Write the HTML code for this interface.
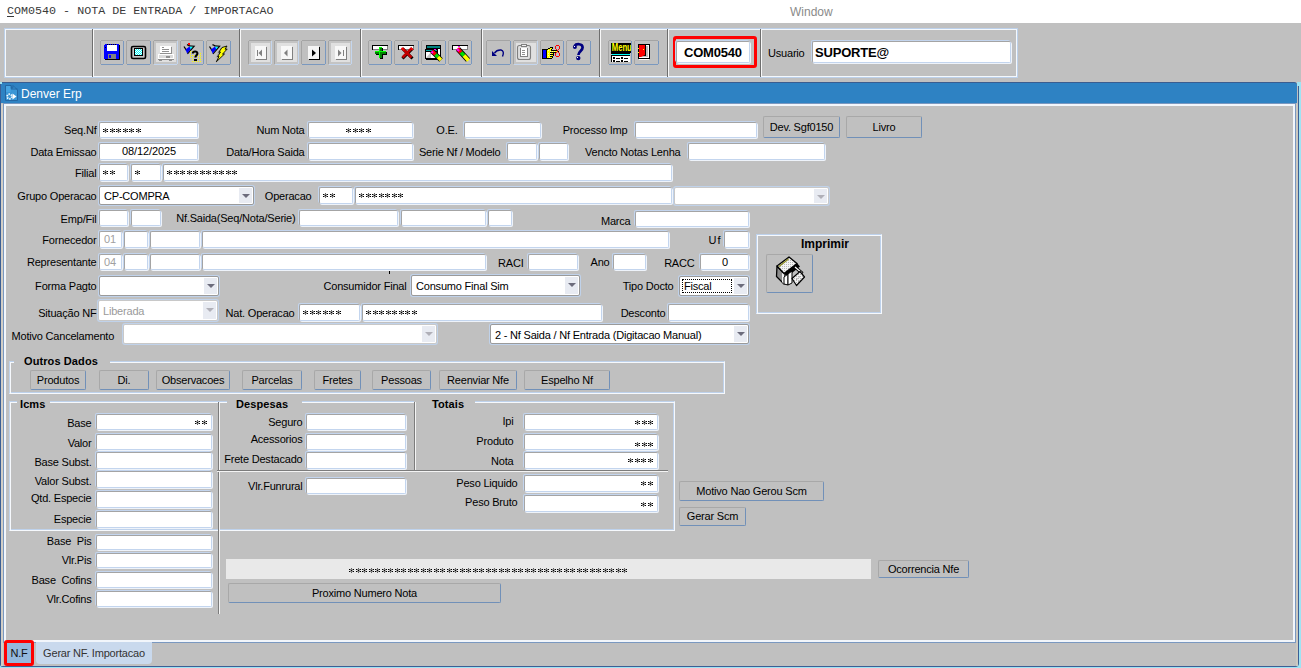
<!DOCTYPE html><html><head><meta charset="utf-8"><style>
*{margin:0;padding:0;box-sizing:border-box}
html,body{width:1301px;height:668px;overflow:hidden;background:#fff;font-family:"Liberation Sans",sans-serif;font-size:11px;color:#000}
div{position:absolute}
span{position:absolute}
.lb{white-space:nowrap;line-height:14px;font-size:11px}
.tf{background:#fff;border:1px solid;border-color:#a4a4a4 #c3d5ee #c3d5ee #a4a4a4;box-shadow:-1px -1px 0 #c3d5ee,1px 1px 0 #eef3fa;border-radius:2px;padding:0 3px 0 4px;white-space:nowrap;overflow:hidden;font-size:11px;letter-spacing:-0.1px}
i.ast{font-style:normal;font-size:15px;letter-spacing:0.66px;position:relative;top:3px;color:#222}
.lb{letter-spacing:-0.2px}
.dd .ddt.foc{left:2px;top:2px;bottom:2px;right:16px;border:1px dotted #000;padding-left:1px;line-height:13px !important}
.bt{letter-spacing:-0.2px}
.dd{letter-spacing:-0.2px}
.dd{background:#fff;border:1px solid #9a9a9a;box-shadow:0 0 0 1px #c0d2ea;border-radius:2px;white-space:nowrap;overflow:hidden}
.dd .ddt{left:4px;top:1px}
.dd .arr{right:1px;top:1px;bottom:1px;width:13px;background:#e8ebf2}
.dd .arr:after{content:"";position:absolute;left:3px;top:6px;border-left:4px solid transparent;border-right:4px solid transparent;border-top:4px solid #6c6c7c}
.dd.dis{border-color:#c8c8c8}
.dd.dis .ddt{color:#9a9a9a}
.dd.dis .arr:after{border-top-color:#b0b0b8}
.bt{background:#c0c0c0;border:1px solid #a8a8a8;border-right-color:#7190b8;border-bottom-color:#7190b8;border-radius:2px;text-align:center;white-space:nowrap}
.fr{border:1px solid;border-color:#bed2ec #f6f9fd #f6f9fd #bed2ec;box-shadow:inset 1px 1px 0 #f6f9fd,inset -1px -1px 0 #bed2ec}
.tt{font-weight:bold;font-size:11px;line-height:14px;white-space:nowrap;letter-spacing:0.1px}
.frt{font-weight:bold;font-size:11px;line-height:14px;background:#c0c0c0;padding:0 3px;white-space:nowrap}
</style></head><body>
<svg width="0" height="0" style="position:absolute"><defs><g id="ast" shape-rendering="crispEdges"><rect x="2" y="0" width="1" height="1" fill="#606060"/><rect x="0" y="1" width="1" height="1" fill="#000"/><rect x="1" y="1" width="1" height="1" fill="#808080"/><rect x="2" y="1" width="1" height="1" fill="#888888"/><rect x="3" y="1" width="1" height="1" fill="#808080"/><rect x="4" y="1" width="1" height="1" fill="#000"/><rect x="1" y="2" width="1" height="1" fill="#a8a8a8"/><rect x="2" y="2" width="1" height="1" fill="#000"/><rect x="3" y="2" width="1" height="1" fill="#a8a8a8"/><rect x="0" y="3" width="1" height="1" fill="#000"/><rect x="1" y="3" width="1" height="1" fill="#808080"/><rect x="2" y="3" width="1" height="1" fill="#888888"/><rect x="3" y="3" width="1" height="1" fill="#808080"/><rect x="4" y="3" width="1" height="1" fill="#000"/><rect x="2" y="4" width="1" height="1" fill="#606060"/></g></defs></svg>
<div style="left:7px;top:4px;font-family:'Liberation Mono',monospace;font-size:11.7px;line-height:14px;color:#3a3a3a;white-space:nowrap"><u style="text-underline-offset:2px">C</u>OM0540 - NOTA DE ENTRADA / IMPORTACAO</div>
<div style="left:790px;top:4px;font-size:12px;line-height:16px;color:#8a8a8a">Window</div>
<div style="left:0px;top:23px;width:1301px;height:59px;background:#c0c0c0"></div>
<div style="left:4px;top:28px;width:1014px;height:50px;border:1px solid #bcd0ea;box-shadow:inset 1px 1px 0 #f4f8fc"></div>
<div style="left:5px;top:76px;width:1012px;height:1px;background:#f4f8fc"></div>
<div style="left:1016px;top:29px;width:1px;height:48px;background:#f4f8fc"></div>
<div style="left:92px;top:29px;width:1px;height:48px;background:#6e6e6e"></div>
<div style="left:93px;top:29px;width:1px;height:48px;background:#f8f8f8"></div>
<div style="left:239px;top:29px;width:1px;height:48px;background:#6e6e6e"></div>
<div style="left:240px;top:29px;width:1px;height:48px;background:#f8f8f8"></div>
<div style="left:360px;top:29px;width:1px;height:48px;background:#6e6e6e"></div>
<div style="left:361px;top:29px;width:1px;height:48px;background:#f8f8f8"></div>
<div style="left:481px;top:29px;width:1px;height:48px;background:#6e6e6e"></div>
<div style="left:482px;top:29px;width:1px;height:48px;background:#f8f8f8"></div>
<div style="left:599px;top:29px;width:1px;height:48px;background:#6e6e6e"></div>
<div style="left:600px;top:29px;width:1px;height:48px;background:#f8f8f8"></div>
<div style="left:667px;top:29px;width:1px;height:48px;background:#6e6e6e"></div>
<div style="left:668px;top:29px;width:1px;height:48px;background:#f8f8f8"></div>
<div style="left:760px;top:29px;width:1px;height:48px;background:#6e6e6e"></div>
<div style="left:761px;top:29px;width:1px;height:48px;background:#f8f8f8"></div>
<svg style="position:absolute;left:0;top:0" width="1301" height="82"><rect x="100" y="41" width="1" height="23" fill="#a4a4a4" shape-rendering="crispEdges"/><rect x="101" y="40" width="22" height="1" fill="#a4a4a4" shape-rendering="crispEdges"/><rect x="123" y="41" width="1" height="23" fill="#7a98bf" shape-rendering="crispEdges"/><rect x="101" y="64" width="22" height="1" fill="#7a98bf" shape-rendering="crispEdges"/><rect x="104" y="44" width="15" height="15" fill="#0000ff" shape-rendering="crispEdges"/><rect x="119" y="45" width="1" height="15" fill="#000" shape-rendering="crispEdges"/><rect x="105" y="59" width="15" height="1" fill="#000" shape-rendering="crispEdges"/><rect x="107" y="45" width="10" height="6" fill="#fff" shape-rendering="crispEdges"/><rect x="107" y="44" width="1" height="1" fill="#000" shape-rendering="crispEdges"/><rect x="109" y="44" width="1" height="1" fill="#000" shape-rendering="crispEdges"/><rect x="111" y="44" width="1" height="1" fill="#000" shape-rendering="crispEdges"/><rect x="113" y="44" width="1" height="1" fill="#000" shape-rendering="crispEdges"/><rect x="115" y="44" width="1" height="1" fill="#000" shape-rendering="crispEdges"/><rect x="105" y="47" width="1" height="1" fill="#000" shape-rendering="crispEdges"/><rect x="108" y="54" width="8" height="5" fill="#808080" shape-rendering="crispEdges"/><rect x="109" y="55" width="2" height="3" fill="#0000ff" shape-rendering="crispEdges"/><rect x="109" y="59" width="1" height="1" fill="#000" shape-rendering="crispEdges"/><rect x="111" y="59" width="1" height="1" fill="#000" shape-rendering="crispEdges"/><rect x="113" y="59" width="1" height="1" fill="#000" shape-rendering="crispEdges"/><rect x="115" y="59" width="1" height="1" fill="#000" shape-rendering="crispEdges"/><rect x="104" y="44" width="1" height="1" fill="#c0c0c0" shape-rendering="crispEdges"/><rect x="126" y="41" width="1" height="23" fill="#a4a4a4" shape-rendering="crispEdges"/><rect x="127" y="40" width="23" height="1" fill="#a4a4a4" shape-rendering="crispEdges"/><rect x="150" y="41" width="1" height="23" fill="#7a98bf" shape-rendering="crispEdges"/><rect x="127" y="64" width="23" height="1" fill="#7a98bf" shape-rendering="crispEdges"/><rect x="131.5" y="46.5" width="14" height="12" rx="1.5" fill="none" stroke="#000" stroke-width="1.6"/><rect x="133" y="48" width="11" height="9" fill="#c8c8c8" shape-rendering="crispEdges"/><rect x="134" y="48" width="9" height="8" fill="#000" shape-rendering="crispEdges"/><rect x="135" y="49" width="7" height="6" fill="#00ffff" shape-rendering="crispEdges"/><rect x="135" y="49" width="1" height="1" fill="#fff" shape-rendering="crispEdges"/><rect x="137" y="49" width="1" height="1" fill="#fff" shape-rendering="crispEdges"/><rect x="139" y="49" width="1" height="1" fill="#fff" shape-rendering="crispEdges"/><rect x="141" y="49" width="1" height="1" fill="#fff" shape-rendering="crispEdges"/><rect x="136" y="50" width="1" height="1" fill="#fff" shape-rendering="crispEdges"/><rect x="138" y="50" width="1" height="1" fill="#fff" shape-rendering="crispEdges"/><rect x="140" y="50" width="1" height="1" fill="#fff" shape-rendering="crispEdges"/><rect x="135" y="51" width="1" height="1" fill="#fff" shape-rendering="crispEdges"/><rect x="137" y="51" width="1" height="1" fill="#fff" shape-rendering="crispEdges"/><rect x="139" y="51" width="1" height="1" fill="#fff" shape-rendering="crispEdges"/><rect x="141" y="51" width="1" height="1" fill="#fff" shape-rendering="crispEdges"/><rect x="136" y="52" width="1" height="1" fill="#fff" shape-rendering="crispEdges"/><rect x="138" y="52" width="1" height="1" fill="#fff" shape-rendering="crispEdges"/><rect x="140" y="52" width="1" height="1" fill="#fff" shape-rendering="crispEdges"/><rect x="135" y="53" width="1" height="1" fill="#fff" shape-rendering="crispEdges"/><rect x="137" y="53" width="1" height="1" fill="#fff" shape-rendering="crispEdges"/><rect x="139" y="53" width="1" height="1" fill="#fff" shape-rendering="crispEdges"/><rect x="141" y="53" width="1" height="1" fill="#fff" shape-rendering="crispEdges"/><rect x="136" y="54" width="1" height="1" fill="#fff" shape-rendering="crispEdges"/><rect x="138" y="54" width="1" height="1" fill="#fff" shape-rendering="crispEdges"/><rect x="140" y="54" width="1" height="1" fill="#fff" shape-rendering="crispEdges"/><rect x="153" y="41" width="1" height="23" fill="#a4a4a4" shape-rendering="crispEdges"/><rect x="154" y="40" width="23" height="1" fill="#a4a4a4" shape-rendering="crispEdges"/><rect x="177" y="41" width="1" height="23" fill="#c4d6ee" shape-rendering="crispEdges"/><rect x="154" y="64" width="23" height="1" fill="#c4d6ee" shape-rendering="crispEdges"/><rect x="154" y="41" width="23" height="23" fill="#c4c4c4" shape-rendering="crispEdges"/><rect x="156" y="43" width="20" height="19" fill="#e0e0e0" shape-rendering="crispEdges"/><rect x="160" y="46" width="11" height="7" fill="#fff" shape-rendering="crispEdges"/><rect x="171" y="47" width="1" height="7" fill="#909090" shape-rendering="crispEdges"/><rect x="160" y="53" width="12" height="1" fill="#909090" shape-rendering="crispEdges"/><rect x="162" y="47" width="2" height="1" fill="#909090" shape-rendering="crispEdges"/><rect x="162" y="49" width="7" height="1" fill="#909090" shape-rendering="crispEdges"/><rect x="162" y="51" width="7" height="1" fill="#909090" shape-rendering="crispEdges"/><rect x="158" y="54" width="16" height="5" fill="#fff" shape-rendering="crispEdges"/><rect x="159" y="55" width="14" height="3" fill="#dadada" shape-rendering="crispEdges"/><rect x="166" y="56" width="4" height="2" fill="#909090" shape-rendering="crispEdges"/><rect x="158" y="59" width="16" height="1" fill="#909090" shape-rendering="crispEdges"/><rect x="159" y="60" width="3" height="1" fill="#909090" shape-rendering="crispEdges"/><rect x="169" y="60" width="3" height="1" fill="#909090" shape-rendering="crispEdges"/><rect x="180" y="41" width="1" height="23" fill="#a4a4a4" shape-rendering="crispEdges"/><rect x="181" y="40" width="22" height="1" fill="#a4a4a4" shape-rendering="crispEdges"/><rect x="203" y="41" width="1" height="23" fill="#7a98bf" shape-rendering="crispEdges"/><rect x="181" y="64" width="22" height="1" fill="#7a98bf" shape-rendering="crispEdges"/><line x1="184" y1="46.5" x2="186.8" y2="50.8" stroke="#000" stroke-width="1.2"/><polygon points="185.5,49.5 189.5,46.5 191.5,48.5 187.2,53.8" fill="#0000ff" /><polygon points="189.5,46.5 194,46.5 190.8,49.5" fill="#00ffff" /><polyline points="188.5,45.8 194.2,46.2 187.5,54" fill="none" stroke="#000" stroke-width="1.1"/><line x1="187" y1="44.6" x2="189.5" y2="45.8" stroke="#000" stroke-width="1.2"/><rect x="188" y="43" width="2" height="2" fill="#ff0000" shape-rendering="crispEdges"/><rect x="190" y="51" width="1" height="1" fill="#ffff00" shape-rendering="crispEdges"/><rect x="192" y="51" width="1" height="1" fill="#ffff00" shape-rendering="crispEdges"/><rect x="190" y="53" width="1" height="1" fill="#ffff00" shape-rendering="crispEdges"/><rect x="200" y="53" width="1" height="1" fill="#ffff00" shape-rendering="crispEdges"/><rect x="190" y="55" width="1" height="1" fill="#ffff00" shape-rendering="crispEdges"/><rect x="192" y="55" width="1" height="1" fill="#ffff00" shape-rendering="crispEdges"/><rect x="194" y="55" width="1" height="1" fill="#ffff00" shape-rendering="crispEdges"/><rect x="198" y="55" width="1" height="1" fill="#ffff00" shape-rendering="crispEdges"/><rect x="200" y="55" width="1" height="1" fill="#ffff00" shape-rendering="crispEdges"/><rect x="190" y="57" width="1" height="1" fill="#ffff00" shape-rendering="crispEdges"/><rect x="192" y="57" width="1" height="1" fill="#ffff00" shape-rendering="crispEdges"/><rect x="198" y="57" width="1" height="1" fill="#ffff00" shape-rendering="crispEdges"/><rect x="200" y="57" width="1" height="1" fill="#ffff00" shape-rendering="crispEdges"/><rect x="192" y="59" width="1" height="1" fill="#ffff00" shape-rendering="crispEdges"/><rect x="198" y="59" width="1" height="1" fill="#ffff00" shape-rendering="crispEdges"/><rect x="200" y="59" width="1" height="1" fill="#ffff00" shape-rendering="crispEdges"/><rect x="192" y="61" width="1" height="1" fill="#ffff00" shape-rendering="crispEdges"/><rect x="194" y="61" width="1" height="1" fill="#ffff00" shape-rendering="crispEdges"/><rect x="196" y="61" width="1" height="1" fill="#ffff00" shape-rendering="crispEdges"/><rect x="198" y="61" width="1" height="1" fill="#ffff00" shape-rendering="crispEdges"/><rect x="200" y="61" width="1" height="1" fill="#ffff00" shape-rendering="crispEdges"/><path d="M192.8,53.6 C192.8,51 197.6,50.6 197.4,53.6 C197.2,55.4 195.4,55.4 195.4,57.6" fill="none" stroke="#000" stroke-width="2.1"/><rect x="194" y="59" width="3" height="2" fill="#000" shape-rendering="crispEdges"/><rect x="206" y="41" width="1" height="23" fill="#a4a4a4" shape-rendering="crispEdges"/><rect x="207" y="40" width="23" height="1" fill="#a4a4a4" shape-rendering="crispEdges"/><rect x="230" y="41" width="1" height="23" fill="#7a98bf" shape-rendering="crispEdges"/><rect x="207" y="64" width="23" height="1" fill="#7a98bf" shape-rendering="crispEdges"/><line x1="209.5" y1="46.5" x2="212.3" y2="50.8" stroke="#000" stroke-width="1.2"/><polygon points="211.0,49.5 215.0,46.5 217.0,48.5 212.7,53.8" fill="#0000ff" /><polygon points="215.0,46.5 219.5,46.5 216.3,49.5" fill="#00ffff" /><polyline points="214.0,45.8 219.7,46.2 213.0,54" fill="none" stroke="#000" stroke-width="1.1"/><line x1="212.5" y1="44.6" x2="215.0" y2="45.8" stroke="#000" stroke-width="1.2"/><polygon points="220.5,48 222.5,47.5 218.8,52.3 216.8,53.5" fill="#a0a0a0" /><polygon points="218.5,52.5 220,52.3 217.5,56.8 215.5,58" fill="#a0a0a0" /><polygon points="222,47.5 227,46 225,49.2 227.2,49 222.5,54.2 224.5,54 216.3,61.8 219,56.5 217.5,56.8 220.5,52 218.8,52.3" fill="#ffff00" stroke="#000" stroke-width="0.9" stroke-linejoin="miter"/><rect x="248" y="41" width="1" height="23" fill="#a4a4a4" shape-rendering="crispEdges"/><rect x="249" y="40" width="22" height="1" fill="#a4a4a4" shape-rendering="crispEdges"/><rect x="271" y="41" width="1" height="23" fill="#c4d6ee" shape-rendering="crispEdges"/><rect x="249" y="64" width="22" height="1" fill="#c4d6ee" shape-rendering="crispEdges"/><rect x="249" y="41" width="22" height="23" fill="#c4c4c4" shape-rendering="crispEdges"/><rect x="251" y="43" width="19" height="19" fill="#e0e0e0" shape-rendering="crispEdges"/><rect x="255" y="46" width="11" height="13" fill="#f8f8f8" shape-rendering="crispEdges"/><rect x="266" y="47" width="1" height="13" fill="#808080" shape-rendering="crispEdges"/><rect x="256" y="59" width="11" height="1" fill="#808080" shape-rendering="crispEdges"/><rect x="266" y="47" width="1" height="13" fill="#808080" shape-rendering="crispEdges"/><rect x="257" y="50" width="1" height="6" fill="#808080" shape-rendering="crispEdges"/><polygon points="258.5,53 262,49.5 262,56.5" fill="#808080" /><rect x="274" y="41" width="1" height="23" fill="#a4a4a4" shape-rendering="crispEdges"/><rect x="275" y="40" width="23" height="1" fill="#a4a4a4" shape-rendering="crispEdges"/><rect x="298" y="41" width="1" height="23" fill="#c4d6ee" shape-rendering="crispEdges"/><rect x="275" y="64" width="23" height="1" fill="#c4d6ee" shape-rendering="crispEdges"/><rect x="275" y="41" width="23" height="23" fill="#c4c4c4" shape-rendering="crispEdges"/><rect x="277" y="43" width="20" height="19" fill="#e0e0e0" shape-rendering="crispEdges"/><rect x="281" y="46" width="11" height="13" fill="#f8f8f8" shape-rendering="crispEdges"/><rect x="292" y="47" width="1" height="13" fill="#808080" shape-rendering="crispEdges"/><rect x="282" y="59" width="11" height="1" fill="#808080" shape-rendering="crispEdges"/><rect x="292" y="47" width="1" height="13" fill="#808080" shape-rendering="crispEdges"/><polygon points="284,53 287.5,49.5 287.5,56.5" fill="#808080" /><rect x="301" y="41" width="1" height="23" fill="#a4a4a4" shape-rendering="crispEdges"/><rect x="302" y="40" width="23" height="1" fill="#a4a4a4" shape-rendering="crispEdges"/><rect x="325" y="41" width="1" height="23" fill="#7a98bf" shape-rendering="crispEdges"/><rect x="302" y="64" width="23" height="1" fill="#7a98bf" shape-rendering="crispEdges"/><rect x="308" y="46" width="11" height="13" fill="#f4f4f4" shape-rendering="crispEdges"/><rect x="319" y="47" width="1" height="13" fill="#000" shape-rendering="crispEdges"/><rect x="309" y="59" width="11" height="1" fill="#000" shape-rendering="crispEdges"/><polygon points="312,49.5 316,53 312,56.5" fill="#000" /><rect x="328" y="41" width="1" height="23" fill="#a4a4a4" shape-rendering="crispEdges"/><rect x="329" y="40" width="22" height="1" fill="#a4a4a4" shape-rendering="crispEdges"/><rect x="351" y="41" width="1" height="23" fill="#c4d6ee" shape-rendering="crispEdges"/><rect x="329" y="64" width="22" height="1" fill="#c4d6ee" shape-rendering="crispEdges"/><rect x="329" y="41" width="22" height="23" fill="#c4c4c4" shape-rendering="crispEdges"/><rect x="331" y="43" width="19" height="19" fill="#e0e0e0" shape-rendering="crispEdges"/><rect x="335" y="46" width="11" height="13" fill="#f8f8f8" shape-rendering="crispEdges"/><rect x="346" y="47" width="1" height="13" fill="#808080" shape-rendering="crispEdges"/><rect x="336" y="59" width="11" height="1" fill="#808080" shape-rendering="crispEdges"/><rect x="346" y="47" width="1" height="13" fill="#808080" shape-rendering="crispEdges"/><polygon points="338,49.5 341.5,53 338,56.5" fill="#808080" /><rect x="343" y="50" width="1" height="6" fill="#808080" shape-rendering="crispEdges"/><rect x="368" y="41" width="1" height="23" fill="#a4a4a4" shape-rendering="crispEdges"/><rect x="369" y="40" width="22" height="1" fill="#a4a4a4" shape-rendering="crispEdges"/><rect x="391" y="41" width="1" height="23" fill="#7a98bf" shape-rendering="crispEdges"/><rect x="369" y="64" width="22" height="1" fill="#7a98bf" shape-rendering="crispEdges"/><rect x="372" y="45" width="16" height="5" fill="#000" shape-rendering="crispEdges"/><rect x="373" y="46" width="14" height="3" fill="#fff" shape-rendering="crispEdges"/><rect x="387" y="46" width="1" height="4" fill="#808080" shape-rendering="crispEdges"/><rect x="373" y="49" width="15" height="1" fill="#808080" shape-rendering="crispEdges"/><rect x="380" y="48" width="3" height="11" fill="#000" shape-rendering="crispEdges"/><rect x="376" y="52" width="11" height="3" fill="#000" shape-rendering="crispEdges"/><rect x="379" y="47" width="3" height="11" fill="#008000" shape-rendering="crispEdges"/><rect x="375" y="51" width="11" height="3" fill="#008000" shape-rendering="crispEdges"/><rect x="379" y="47" width="1" height="11" fill="#00ff00" shape-rendering="crispEdges"/><rect x="375" y="51" width="11" height="1" fill="#00ff00" shape-rendering="crispEdges"/><rect x="379" y="47" width="3" height="1" fill="#00ff00" shape-rendering="crispEdges"/><rect x="394" y="41" width="1" height="23" fill="#a4a4a4" shape-rendering="crispEdges"/><rect x="395" y="40" width="23" height="1" fill="#a4a4a4" shape-rendering="crispEdges"/><rect x="418" y="41" width="1" height="23" fill="#7a98bf" shape-rendering="crispEdges"/><rect x="395" y="64" width="23" height="1" fill="#7a98bf" shape-rendering="crispEdges"/><rect x="398" y="45" width="16" height="5" fill="#000" shape-rendering="crispEdges"/><rect x="399" y="46" width="14" height="3" fill="#fff" shape-rendering="crispEdges"/><rect x="413" y="46" width="1" height="4" fill="#808080" shape-rendering="crispEdges"/><rect x="399" y="49" width="15" height="1" fill="#808080" shape-rendering="crispEdges"/><line x1="402.5" y1="48.5" x2="412.5" y2="58.5" stroke="#000" stroke-width="3"/><line x1="412.5" y1="48.5" x2="402.5" y2="58.5" stroke="#000" stroke-width="3"/><line x1="402" y1="48" x2="411.5" y2="57.5" stroke="#c00000" stroke-width="2.6"/><line x1="412" y1="48" x2="402.5" y2="57.5" stroke="#c00000" stroke-width="2.6"/><line x1="401.5" y1="48" x2="404" y2="50.5" stroke="#ff0000" stroke-width="1.2"/><line x1="411" y1="48" x2="413" y2="50" stroke="#ff0000" stroke-width="1.2"/><rect x="421" y="41" width="1" height="23" fill="#a4a4a4" shape-rendering="crispEdges"/><rect x="422" y="40" width="23" height="1" fill="#a4a4a4" shape-rendering="crispEdges"/><rect x="445" y="41" width="1" height="23" fill="#7a98bf" shape-rendering="crispEdges"/><rect x="422" y="64" width="23" height="1" fill="#7a98bf" shape-rendering="crispEdges"/><rect x="426" y="45" width="15" height="15" fill="#000" shape-rendering="crispEdges"/><rect x="427" y="46" width="13" height="2" fill="#008080" shape-rendering="crispEdges"/><rect x="427" y="48" width="13" height="1" fill="#000" shape-rendering="crispEdges"/><rect x="427" y="49" width="13" height="10" fill="#fff" shape-rendering="crispEdges"/><rect x="425" y="49" width="13" height="10" fill="#000" shape-rendering="crispEdges"/><rect x="426" y="50" width="11" height="1" fill="#00a0a0" shape-rendering="crispEdges"/><rect x="426" y="52" width="11" height="6" fill="#fff" shape-rendering="crispEdges"/><polygon points="426,58 431,52 431,58" fill="#c8c8c8" /><rect x="430" y="58" width="11" height="1" fill="#000" shape-rendering="crispEdges"/><line x1="432" y1="51" x2="441" y2="60" stroke="#000" stroke-width="5"/><line x1="432" y1="51" x2="435.5" y2="54.5" stroke="#ff0000" stroke-width="3.4"/><line x1="431.5" y1="51.5" x2="433" y2="53" stroke="#ff00ff" stroke-width="2"/><line x1="435.5" y1="54.5" x2="438" y2="57" stroke="#00e000" stroke-width="3.4"/><line x1="438" y1="57" x2="441" y2="60" stroke="#ffff00" stroke-width="3.4"/><rect x="434" y="49" width="2" height="1" fill="#ff00ff" shape-rendering="crispEdges"/><rect x="448" y="41" width="1" height="23" fill="#a4a4a4" shape-rendering="crispEdges"/><rect x="449" y="40" width="22" height="1" fill="#a4a4a4" shape-rendering="crispEdges"/><rect x="471" y="41" width="1" height="23" fill="#7a98bf" shape-rendering="crispEdges"/><rect x="449" y="64" width="22" height="1" fill="#7a98bf" shape-rendering="crispEdges"/><rect x="452" y="45" width="16" height="5" fill="#000" shape-rendering="crispEdges"/><rect x="453" y="46" width="14" height="3" fill="#fff" shape-rendering="crispEdges"/><rect x="467" y="46" width="1" height="4" fill="#808080" shape-rendering="crispEdges"/><rect x="453" y="49" width="15" height="1" fill="#808080" shape-rendering="crispEdges"/><line x1="458" y1="49" x2="468" y2="60" stroke="#000" stroke-width="5.5"/><line x1="457.5" y1="48.5" x2="461" y2="52.5" stroke="#ff0000" stroke-width="3.8"/><line x1="457" y1="49" x2="459" y2="51" stroke="#ff00ff" stroke-width="2.2"/><line x1="461" y1="52.5" x2="464" y2="55.5" stroke="#00e000" stroke-width="3.8"/><line x1="464" y1="55.5" x2="468.5" y2="60.5" stroke="#ffff00" stroke-width="3.8"/><rect x="458" y="46" width="2" height="1" fill="#ff00ff" shape-rendering="crispEdges"/><rect x="486" y="41" width="1" height="23" fill="#a4a4a4" shape-rendering="crispEdges"/><rect x="487" y="40" width="23" height="1" fill="#a4a4a4" shape-rendering="crispEdges"/><rect x="510" y="41" width="1" height="23" fill="#7a98bf" shape-rendering="crispEdges"/><rect x="487" y="64" width="23" height="1" fill="#7a98bf" shape-rendering="crispEdges"/><polygon points="492,51 497,56 492,56" fill="#000080" /><path d="M494.5,53 C496.5,50 498.5,49.8 501,50 C503.5,50.5 504,53 502.5,56.5" fill="none" stroke="#000080" stroke-width="1.4"/><rect x="513" y="41" width="1" height="23" fill="#a4a4a4" shape-rendering="crispEdges"/><rect x="514" y="40" width="23" height="1" fill="#a4a4a4" shape-rendering="crispEdges"/><rect x="537" y="41" width="1" height="23" fill="#c4d6ee" shape-rendering="crispEdges"/><rect x="514" y="64" width="23" height="1" fill="#c4d6ee" shape-rendering="crispEdges"/><rect x="514" y="41" width="23" height="23" fill="#c4c4c4" shape-rendering="crispEdges"/><rect x="516" y="43" width="20" height="19" fill="#e0e0e0" shape-rendering="crispEdges"/><rect x="517.5" y="45.5" width="13" height="14" rx="2" fill="#dedede" stroke="#808080" stroke-width="1.1"/><rect x="520" y="48" width="8" height="9" fill="#fff" shape-rendering="crispEdges"/><rect x="520" y="48" width="1" height="9" fill="#808080" shape-rendering="crispEdges"/><rect x="520" y="56" width="8" height="1" fill="#808080" shape-rendering="crispEdges"/><rect x="527" y="48" width="1" height="9" fill="#808080" shape-rendering="crispEdges"/><rect x="521" y="44" width="6" height="3" fill="#808080" shape-rendering="crispEdges"/><rect x="522" y="45" width="4" height="1" fill="#f0f0f0" shape-rendering="crispEdges"/><rect x="522" y="50" width="3" height="1" fill="#909090" shape-rendering="crispEdges"/><rect x="522" y="52" width="3" height="1" fill="#909090" shape-rendering="crispEdges"/><rect x="522" y="54" width="3" height="1" fill="#909090" shape-rendering="crispEdges"/><rect x="540" y="41" width="1" height="23" fill="#a4a4a4" shape-rendering="crispEdges"/><rect x="541" y="40" width="22" height="1" fill="#a4a4a4" shape-rendering="crispEdges"/><rect x="563" y="41" width="1" height="23" fill="#7a98bf" shape-rendering="crispEdges"/><rect x="541" y="64" width="22" height="1" fill="#7a98bf" shape-rendering="crispEdges"/><rect x="550" y="47" width="3" height="1" fill="#000" shape-rendering="crispEdges"/><rect x="548" y="48" width="2" height="1" fill="#000" shape-rendering="crispEdges"/><rect x="550" y="48" width="2" height="1" fill="#ffff00" shape-rendering="crispEdges"/><rect x="552" y="48" width="1" height="1" fill="#000" shape-rendering="crispEdges"/><rect x="542" y="49" width="6" height="1" fill="#000" shape-rendering="crispEdges"/><rect x="548" y="49" width="3" height="1" fill="#ffff00" shape-rendering="crispEdges"/><rect x="551" y="49" width="1" height="1" fill="#000" shape-rendering="crispEdges"/><rect x="542" y="50" width="1" height="1" fill="#000" shape-rendering="crispEdges"/><rect x="543" y="50" width="3" height="1" fill="#0000ff" shape-rendering="crispEdges"/><rect x="546" y="50" width="1" height="1" fill="#000" shape-rendering="crispEdges"/><rect x="547" y="50" width="4" height="1" fill="#ffff00" shape-rendering="crispEdges"/><rect x="551" y="50" width="6" height="1" fill="#000" shape-rendering="crispEdges"/><rect x="542" y="51" width="1" height="1" fill="#000" shape-rendering="crispEdges"/><rect x="543" y="51" width="3" height="1" fill="#0000ff" shape-rendering="crispEdges"/><rect x="546" y="51" width="1" height="1" fill="#000" shape-rendering="crispEdges"/><rect x="547" y="51" width="10" height="1" fill="#ffff00" shape-rendering="crispEdges"/><rect x="542" y="52" width="1" height="1" fill="#000" shape-rendering="crispEdges"/><rect x="543" y="52" width="3" height="1" fill="#0000ff" shape-rendering="crispEdges"/><rect x="546" y="52" width="1" height="1" fill="#000" shape-rendering="crispEdges"/><rect x="547" y="52" width="3" height="1" fill="#ffff00" shape-rendering="crispEdges"/><rect x="550" y="52" width="7" height="1" fill="#000" shape-rendering="crispEdges"/><rect x="542" y="53" width="1" height="1" fill="#000" shape-rendering="crispEdges"/><rect x="543" y="53" width="3" height="1" fill="#0000ff" shape-rendering="crispEdges"/><rect x="546" y="53" width="1" height="1" fill="#000" shape-rendering="crispEdges"/><rect x="547" y="53" width="6" height="1" fill="#ffff00" shape-rendering="crispEdges"/><rect x="553" y="53" width="1" height="1" fill="#000" shape-rendering="crispEdges"/><rect x="542" y="54" width="1" height="1" fill="#000" shape-rendering="crispEdges"/><rect x="543" y="54" width="3" height="1" fill="#0000ff" shape-rendering="crispEdges"/><rect x="546" y="54" width="1" height="1" fill="#000" shape-rendering="crispEdges"/><rect x="547" y="54" width="3" height="1" fill="#ffff00" shape-rendering="crispEdges"/><rect x="550" y="54" width="4" height="1" fill="#000" shape-rendering="crispEdges"/><rect x="542" y="55" width="1" height="1" fill="#000" shape-rendering="crispEdges"/><rect x="543" y="55" width="3" height="1" fill="#0000ff" shape-rendering="crispEdges"/><rect x="546" y="55" width="1" height="1" fill="#000" shape-rendering="crispEdges"/><rect x="547" y="55" width="6" height="1" fill="#ffff00" shape-rendering="crispEdges"/><rect x="553" y="55" width="1" height="1" fill="#000" shape-rendering="crispEdges"/><rect x="542" y="56" width="1" height="1" fill="#000" shape-rendering="crispEdges"/><rect x="543" y="56" width="3" height="1" fill="#0000ff" shape-rendering="crispEdges"/><rect x="546" y="56" width="1" height="1" fill="#000" shape-rendering="crispEdges"/><rect x="547" y="56" width="3" height="1" fill="#ffff00" shape-rendering="crispEdges"/><rect x="550" y="56" width="3" height="1" fill="#000" shape-rendering="crispEdges"/><rect x="542" y="57" width="1" height="1" fill="#000" shape-rendering="crispEdges"/><rect x="543" y="57" width="3" height="1" fill="#0000ff" shape-rendering="crispEdges"/><rect x="546" y="57" width="1" height="1" fill="#000" shape-rendering="crispEdges"/><rect x="547" y="57" width="5" height="1" fill="#ffff00" shape-rendering="crispEdges"/><rect x="552" y="57" width="1" height="1" fill="#000" shape-rendering="crispEdges"/><rect x="542" y="58" width="10" height="1" fill="#000" shape-rendering="crispEdges"/><rect x="548" y="50" width="1" height="1" fill="#f8f8c0" shape-rendering="crispEdges"/><rect x="550" y="51" width="1" height="1" fill="#f8f8c0" shape-rendering="crispEdges"/><rect x="552" y="51" width="1" height="1" fill="#f8f8c0" shape-rendering="crispEdges"/><rect x="554" y="51" width="1" height="1" fill="#f8f8c0" shape-rendering="crispEdges"/><rect x="548" y="53" width="1" height="1" fill="#f8f8c0" shape-rendering="crispEdges"/><rect x="550" y="53" width="1" height="1" fill="#f8f8c0" shape-rendering="crispEdges"/><rect x="548" y="55" width="1" height="1" fill="#f8f8c0" shape-rendering="crispEdges"/><rect x="550" y="55" width="1" height="1" fill="#f8f8c0" shape-rendering="crispEdges"/><rect x="549" y="57" width="1" height="1" fill="#f8f8c0" shape-rendering="crispEdges"/><rect x="556" y="45" width="1" height="1" fill="#ff0000" shape-rendering="crispEdges"/><rect x="557" y="45" width="1" height="1" fill="#ff0000" shape-rendering="crispEdges"/><rect x="558" y="45" width="1" height="1" fill="#ff0000" shape-rendering="crispEdges"/><rect x="555" y="46" width="1" height="1" fill="#ff0000" shape-rendering="crispEdges"/><rect x="559" y="46" width="1" height="1" fill="#ff0000" shape-rendering="crispEdges"/><rect x="555" y="47" width="1" height="1" fill="#ff0000" shape-rendering="crispEdges"/><rect x="559" y="47" width="1" height="1" fill="#ff0000" shape-rendering="crispEdges"/><rect x="555" y="48" width="1" height="1" fill="#ff0000" shape-rendering="crispEdges"/><rect x="559" y="48" width="1" height="1" fill="#ff0000" shape-rendering="crispEdges"/><rect x="556" y="49" width="1" height="1" fill="#ff0000" shape-rendering="crispEdges"/><rect x="558" y="49" width="1" height="1" fill="#ff0000" shape-rendering="crispEdges"/><rect x="557" y="50" width="1" height="1" fill="#ff0000" shape-rendering="crispEdges"/><rect x="557" y="51" width="1" height="1" fill="#ff0000" shape-rendering="crispEdges"/><rect x="556" y="52" width="1" height="1" fill="#ff0000" shape-rendering="crispEdges"/><rect x="558" y="52" width="1" height="1" fill="#ff0000" shape-rendering="crispEdges"/><rect x="555" y="53" width="1" height="1" fill="#ff0000" shape-rendering="crispEdges"/><rect x="559" y="53" width="1" height="1" fill="#ff0000" shape-rendering="crispEdges"/><rect x="555" y="54" width="1" height="1" fill="#ff0000" shape-rendering="crispEdges"/><rect x="559" y="54" width="1" height="1" fill="#ff0000" shape-rendering="crispEdges"/><rect x="555" y="55" width="1" height="1" fill="#ff0000" shape-rendering="crispEdges"/><rect x="559" y="55" width="1" height="1" fill="#ff0000" shape-rendering="crispEdges"/><rect x="556" y="56" width="1" height="1" fill="#ff0000" shape-rendering="crispEdges"/><rect x="557" y="56" width="1" height="1" fill="#ff0000" shape-rendering="crispEdges"/><rect x="558" y="56" width="1" height="1" fill="#ff0000" shape-rendering="crispEdges"/><rect x="558" y="51" width="1" height="1" fill="#000" shape-rendering="crispEdges"/><rect x="566" y="41" width="1" height="23" fill="#a4a4a4" shape-rendering="crispEdges"/><rect x="567" y="40" width="23" height="1" fill="#a4a4a4" shape-rendering="crispEdges"/><rect x="590" y="41" width="1" height="23" fill="#7a98bf" shape-rendering="crispEdges"/><rect x="567" y="64" width="23" height="1" fill="#7a98bf" shape-rendering="crispEdges"/><path d="M574.6,46 C576,43.6 582.6,43.2 582.6,47.6 C582.6,50.8 578.6,51.2 578.4,55" fill="none" stroke="#000080" stroke-width="2.7"/><circle cx="574.9" cy="47" r="2" fill="#000080"/><circle cx="578.3" cy="58.1" r="2.2" fill="#000080"/><rect x="574" y="46" width="1" height="1" fill="#ffffff" shape-rendering="crispEdges"/><rect x="577" y="57" width="1" height="1" fill="#ffffff" shape-rendering="crispEdges"/><rect x="608" y="41" width="1" height="23" fill="#a4a4a4" shape-rendering="crispEdges"/><rect x="609" y="40" width="22" height="1" fill="#a4a4a4" shape-rendering="crispEdges"/><rect x="631" y="41" width="1" height="23" fill="#7a98bf" shape-rendering="crispEdges"/><rect x="609" y="64" width="22" height="1" fill="#7a98bf" shape-rendering="crispEdges"/><rect x="611" y="43" width="20" height="10" fill="#000" shape-rendering="crispEdges"/><defs><clipPath id="mclip"><rect x="611" y="43" width="20" height="10"/></clipPath></defs><text x="611.8" y="51.5" font-family="Liberation Sans" font-weight="bold" font-size="9.5" fill="#ffff00" clip-path="url(#mclip)" textLength="20" lengthAdjust="spacingAndGlyphs" transform="translate(611.8,51.5) scale(1,1.12) translate(-611.8,-51.5)">Menu</text><rect x="611" y="53" width="19" height="1" fill="#000" shape-rendering="crispEdges"/><rect x="612" y="54" width="18" height="1" fill="#00ffff" shape-rendering="crispEdges"/><rect x="611" y="55" width="19" height="1" fill="#000" shape-rendering="crispEdges"/><rect x="611" y="56" width="1" height="6" fill="#000" shape-rendering="crispEdges"/><rect x="612" y="56" width="18" height="6" fill="#fff" shape-rendering="crispEdges"/><rect x="613" y="57" width="2" height="2" fill="#000" shape-rendering="crispEdges"/><rect x="616" y="58" width="4" height="1" fill="#000" shape-rendering="crispEdges"/><rect x="621" y="57" width="2" height="2" fill="#000" shape-rendering="crispEdges"/><rect x="624" y="58" width="4" height="1" fill="#000" shape-rendering="crispEdges"/><rect x="613" y="60" width="2" height="2" fill="#000" shape-rendering="crispEdges"/><rect x="616" y="61" width="4" height="1" fill="#000" shape-rendering="crispEdges"/><rect x="621" y="60" width="2" height="2" fill="#000" shape-rendering="crispEdges"/><rect x="624" y="61" width="4" height="1" fill="#000" shape-rendering="crispEdges"/><rect x="634" y="41" width="1" height="23" fill="#a4a4a4" shape-rendering="crispEdges"/><rect x="635" y="40" width="23" height="1" fill="#a4a4a4" shape-rendering="crispEdges"/><rect x="658" y="41" width="1" height="23" fill="#7a98bf" shape-rendering="crispEdges"/><rect x="635" y="64" width="23" height="1" fill="#7a98bf" shape-rendering="crispEdges"/><rect x="638" y="44" width="12" height="15" fill="#000" shape-rendering="crispEdges"/><rect x="646" y="45" width="3" height="13" fill="#fff" shape-rendering="crispEdges"/><rect x="646" y="46" width="2" height="11" fill="#c0c0c0" shape-rendering="crispEdges"/><rect x="639" y="57" width="10" height="1" fill="#fff" shape-rendering="crispEdges"/><rect x="641" y="56" width="6" height="1" fill="#c0c0c0" shape-rendering="crispEdges"/><polygon points="639,45 645,45 645,55 643,56 641,57 639,57" fill="#ff0000" /><rect x="643" y="49" width="1" height="1" fill="#ffff00" shape-rendering="crispEdges"/><rect x="638" y="48" width="1" height="1" fill="#ffff00" shape-rendering="crispEdges"/><rect x="638" y="52" width="1" height="1" fill="#ffff00" shape-rendering="crispEdges"/><rect x="639" y="59" width="10" height="1" fill="#fff" shape-rendering="crispEdges"/></svg>
<div style="left:673px;top:36px;width:84px;height:32px;border:3px solid #ff0000;border-radius:3px"></div>
<div class="tf" style="left:676px;top:41px;width:74px;height:22px"></div>
<div style="left:684px;top:44px;font-weight:bold;font-size:13px;line-height:18px;letter-spacing:-0.2px">COM0540</div>
<div class="lb" style="left:768px;top:46px">Usuario</div>
<div class="tf" style="left:812px;top:41px;width:199px;height:22px"></div>
<div style="left:815px;top:44px;font-weight:bold;font-size:13px;line-height:18px;letter-spacing:-0.2px">SUPORTE@</div>
<div style="left:0px;top:82px;width:1301px;height:586px;background:#9fe3f3"></div>
<div style="left:0px;top:82px;width:1299px;height:585px;background:#c0c0c0;border-left:1px solid #3b5f95;border-right:1px solid #3b5f95;border-bottom:1px solid #3b5f95;border-radius:0 0 4px 3px"></div>
<div style="left:1px;top:104px;width:2px;height:562px;background:#d2cec6"></div>
<div style="left:1296px;top:104px;width:2px;height:562px;background:#ccc8c0"></div>
<div style="left:1px;top:82px;width:1296px;height:21px;background:#2e82c3;border-top:1px solid #3a5d90;border-radius:0 3px 0 0"></div>
<div style="left:0px;top:82px;width:2px;height:2px;background:#9fe3f3"></div>
<div style="left:1297px;top:82px;width:4px;height:4px;background:#9fe3f3"></div>
<div style="left:21px;top:87px;font-size:12px;line-height:15px;color:#fff">Denver Erp</div>
<svg style="position:absolute;left:5px;top:85px" width="14" height="17"><path d="M0.5,0.5 H6 V3 H8 V0.5 L12.5,5 V15.5 H0.5 Z" fill="#3a96d6" stroke="#2366a3" stroke-width="1"/><path d="M6,0.5 V4 H12.5" fill="none" stroke="#2366a3"/><rect x="1" y="1" width="4.5" height="6" fill="#46a4e2"/><circle cx="4.5" cy="11.5" r="2.3" fill="none" stroke="#fff" stroke-width="1.7" stroke-dasharray="1.3 0.9"/><polygon points="7.5,8.5 11.5,11.5 7.5,14.5" fill="#fff"/></svg>
<div style="left:3px;top:103px;width:1293px;height:540px;border:1px solid #7a98c0;box-shadow:inset 2px 2px 0 #f2f6fb,inset -2px -2px 0 #f2f6fb"></div>
<div class="lb" style="right:1204.5px;top:123px;">Seq.Nf</div>
<div class="tf" style="left:99px;top:122px;width:99px;height:16px;"></div>
<svg style="position:absolute;left:103px;top:128px;overflow:visible" width="38" height="5"><use href="#ast" x="0"/><use href="#ast" x="7"/><use href="#ast" x="13"/><use href="#ast" x="20"/><use href="#ast" x="26"/><use href="#ast" x="33"/></svg>
<div class="lb" style="right:996.5px;top:123px;">Num Nota</div>
<div class="tf" style="left:308px;top:122px;width:105px;height:16px;"></div>
<svg style="position:absolute;left:346px;top:128px;overflow:visible" width="25" height="5"><use href="#ast" x="0"/><use href="#ast" x="7"/><use href="#ast" x="13"/><use href="#ast" x="20"/></svg>
<div class="lb" style="right:843.5px;top:123px;">O.E.</div>
<div class="tf" style="left:464px;top:122px;width:77px;height:16px;text-align:left;line-height:14px;"></div>
<div class="lb" style="right:673.5px;top:123px;">Processo Imp</div>
<div class="tf" style="left:635px;top:122px;width:122px;height:16px;text-align:left;line-height:14px;"></div>
<div class="bt" style="left:763px;top:116px;width:77px;height:22px;line-height:20px;">Dev. Sgf0150</div>
<div class="bt" style="left:846px;top:116px;width:76px;height:22px;line-height:20px;">Livro</div>
<div class="lb" style="right:1204.5px;top:144.5px;">Data Emissao</div>
<div class="tf" style="left:99px;top:143px;width:99px;height:17px;text-align:center;line-height:15px;">08/12/2025</div>
<div class="lb" style="right:996.5px;top:144.5px;">Data/Hora Saida</div>
<div class="tf" style="left:308px;top:143px;width:105px;height:17px;text-align:left;line-height:15px;"></div>
<div class="lb" style="right:800.5px;top:144.5px;">Serie Nf / Modelo</div>
<div class="tf" style="left:507px;top:143px;width:30px;height:17px;text-align:left;line-height:15px;"></div>
<div class="tf" style="left:539px;top:143px;width:29px;height:17px;text-align:left;line-height:15px;"></div>
<div class="lb" style="right:620.5px;top:144.5px;">Vencto Notas Lenha</div>
<div class="tf" style="left:688px;top:143px;width:137px;height:17px;text-align:left;line-height:15px;"></div>
<div class="lb" style="right:1204.5px;top:165.5px;">Filial</div>
<div class="tf" style="left:99px;top:164px;width:29px;height:17px;"></div>
<svg style="position:absolute;left:103px;top:170px;overflow:visible" width="12" height="5"><use href="#ast" x="0"/><use href="#ast" x="7"/></svg>
<div class="tf" style="left:131px;top:164px;width:30px;height:17px;"></div>
<svg style="position:absolute;left:135px;top:170px;overflow:visible" width="6" height="5"><use href="#ast" x="0"/></svg>
<div class="tf" style="left:163px;top:164px;width:509px;height:17px;"></div>
<svg style="position:absolute;left:167px;top:170px;overflow:visible" width="71" height="5"><use href="#ast" x="0"/><use href="#ast" x="7"/><use href="#ast" x="13"/><use href="#ast" x="20"/><use href="#ast" x="26"/><use href="#ast" x="33"/><use href="#ast" x="39"/><use href="#ast" x="46"/><use href="#ast" x="52"/><use href="#ast" x="59"/><use href="#ast" x="65"/></svg>
<div class="lb" style="right:1204.5px;top:188.5px;">Grupo Operacao</div>
<div class="dd" style="left:99px;top:186px;width:155px;height:19px;"><span class="ddt" style="line-height:17px">CP-COMPRA</span><span class="arr"></span></div>
<div class="lb" style="right:989.5px;top:189px;">Operacao</div>
<div class="tf" style="left:319px;top:187px;width:34px;height:17px;"></div>
<svg style="position:absolute;left:323px;top:193px;overflow:visible" width="12" height="5"><use href="#ast" x="0"/><use href="#ast" x="7"/></svg>
<div class="tf" style="left:355px;top:187px;width:317px;height:17px;"></div>
<svg style="position:absolute;left:359px;top:193px;overflow:visible" width="45" height="5"><use href="#ast" x="0"/><use href="#ast" x="7"/><use href="#ast" x="13"/><use href="#ast" x="20"/><use href="#ast" x="26"/><use href="#ast" x="33"/><use href="#ast" x="39"/></svg>
<div class="dd dis" style="left:674px;top:187px;width:155px;height:18px;"><span class="ddt" style="line-height:16px"></span><span class="arr"></span></div>
<div class="lb" style="right:1204.5px;top:212px;">Emp/Fil</div>
<div class="tf" style="left:99px;top:210px;width:29px;height:16px;text-align:left;line-height:14px;"></div>
<div class="tf" style="left:131px;top:210px;width:30px;height:16px;text-align:left;line-height:14px;"></div>
<div class="lb" style="right:1005.5px;top:211px;">Nf.Saida(Seq/Nota/Serie)</div>
<div class="tf" style="left:299px;top:210px;width:99px;height:16px;text-align:left;line-height:14px;"></div>
<div class="tf" style="left:401px;top:210px;width:85px;height:16px;text-align:left;line-height:14px;"></div>
<div class="tf" style="left:488px;top:210px;width:24px;height:16px;text-align:left;line-height:14px;"></div>
<div class="lb" style="right:670.5px;top:213.5px;">Marca</div>
<div class="tf" style="left:635px;top:211px;width:114px;height:16px;text-align:left;line-height:14px;"></div>
<div class="lb" style="right:1204.5px;top:232.5px;">Fornecedor</div>
<div class="tf" style="left:99px;top:231px;width:23px;height:17px;text-align:left;line-height:15px;color:#a0a0a0">01</div>
<div class="tf" style="left:124px;top:231px;width:24px;height:17px;text-align:left;line-height:15px;"></div>
<div class="tf" style="left:150px;top:231px;width:50px;height:17px;text-align:left;line-height:15px;"></div>
<div class="tf" style="left:202px;top:231px;width:467px;height:17px;text-align:left;line-height:15px;"></div>
<div class="lb" style="right:579.5px;top:232.5px;letter-spacing:1px">Uf</div>
<div class="tf" style="left:724px;top:231px;width:25px;height:17px;text-align:left;line-height:15px;"></div>
<div class="lb" style="right:1204.5px;top:255px;">Representante</div>
<div class="tf" style="left:99px;top:254px;width:23px;height:16px;text-align:left;line-height:14px;color:#a0a0a0">04</div>
<div class="tf" style="left:124px;top:254px;width:24px;height:16px;text-align:left;line-height:14px;"></div>
<div class="tf" style="left:150px;top:254px;width:50px;height:16px;text-align:left;line-height:14px;"></div>
<div class="tf" style="left:202px;top:254px;width:284px;height:16px;text-align:left;line-height:14px;"></div>
<div style="left:389px;top:271px;width:1px;height:3px;background:#000"></div>
<div class="lb" style="right:777.5px;top:256px;">RACI</div>
<div class="tf" style="left:528px;top:254px;width:50px;height:16px;text-align:left;line-height:14px;"></div>
<div class="lb" style="right:691.5px;top:254.5px;">Ano</div>
<div class="tf" style="left:613px;top:254px;width:33px;height:16px;text-align:left;line-height:14px;"></div>
<div class="lb" style="right:606.5px;top:256px;">RACC</div>
<div class="tf" style="left:700px;top:254px;width:49px;height:16px;text-align:center;line-height:14px;">0</div>
<div class="fr" style="left:756px;top:234px;width:126px;height:80px;"></div>
<div style="left:801px;top:237px;font-weight:bold;font-size:12px;line-height:14px">Imprimir</div>
<div class="bt" style="left:766px;top:254px;width:47px;height:39px;line-height:37px;"></div>
<svg style="position:absolute;left:774px;top:256px" width="34" height="34" viewBox="0 0 34 34">
<defs><pattern id="dots" width="2" height="2" patternUnits="userSpaceOnUse"><rect width="2" height="2" fill="#f4f4f4"/><rect width="1" height="1" fill="#b8b8b8"/></pattern></defs>
<polygon points="2.5,20.5 3,10 10,17.5 10,28" fill="#8c8c8c" stroke="#000" stroke-width="1.3" stroke-linejoin="round"/>
<polygon points="8,17 10,17.5 10,28 8,26" fill="#f0f0f0"/>
<polygon points="10,17.5 23,7 26,10.5 13,21" fill="#000"/>
<polygon points="3,10 15,1 23,7.5 10,17.5" fill="url(#dots)" stroke="#000" stroke-width="1.3" stroke-linejoin="round"/>
<line x1="5" y1="10.5" x2="14.5" y2="3" stroke="#8c8c20" stroke-width="1.2"/>
<polygon points="10,21 14,18 14,29 10,28" fill="#fff" stroke="#000" stroke-width="1"/>
<polygon points="14,18 18,15 18,27 14,29" fill="#fff" stroke="#000" stroke-width="1"/>
<line x1="21" y1="11" x2="28.5" y2="17.5" stroke="#000" stroke-width="3"/>
<line x1="21" y1="11" x2="28" y2="17" stroke="#fff" stroke-width="1.2"/>
<polygon points="18,22.5 26,15.5 30.5,21 22.5,29.5" fill="url(#dots)" stroke="#000" stroke-width="1.2" stroke-linejoin="round"/>
<line x1="22" y1="24" x2="26" y2="20.5" stroke="#888" stroke-width="1" stroke-dasharray="1 1"/>
<line x1="24" y1="26" x2="28" y2="22.5" stroke="#888" stroke-width="1" stroke-dasharray="1 1"/>
</svg>
<div class="lb" style="right:1204.5px;top:279px;">Forma Pagto</div>
<div class="dd" style="left:99px;top:276px;width:120px;height:20px;"><span class="ddt" style="line-height:18px"></span><span class="arr"></span></div>
<div class="lb" style="right:894.5px;top:279px;">Consumidor Final</div>
<div class="dd" style="left:411px;top:275px;width:169px;height:21px;"><span class="ddt" style="line-height:19px">Consumo Final Sim</span><span class="arr"></span></div>
<div class="lb" style="right:627.5px;top:279px;">Tipo Docto</div>
<div class="dd" style="left:679px;top:276px;width:70px;height:20px;"><span class="ddt foc" style="line-height:14px">Fiscal</span><span class="arr"></span></div>
<div class="lb" style="right:1204.5px;top:306px;">Situação NF</div>
<div class="dd dis" style="left:98px;top:300px;width:120px;height:21px;"><span class="ddt" style="line-height:19px">Liberada</span><span class="arr"></span></div>
<div class="lb" style="right:1006.5px;top:306px;">Nat. Operacao</div>
<div class="tf" style="left:299px;top:304px;width:61px;height:17px;"></div>
<svg style="position:absolute;left:303px;top:310px;overflow:visible" width="38" height="5"><use href="#ast" x="0"/><use href="#ast" x="7"/><use href="#ast" x="13"/><use href="#ast" x="20"/><use href="#ast" x="26"/><use href="#ast" x="33"/></svg>
<div class="tf" style="left:362px;top:304px;width:240px;height:17px;"></div>
<svg style="position:absolute;left:366px;top:310px;overflow:visible" width="51" height="5"><use href="#ast" x="0"/><use href="#ast" x="7"/><use href="#ast" x="13"/><use href="#ast" x="20"/><use href="#ast" x="26"/><use href="#ast" x="33"/><use href="#ast" x="39"/><use href="#ast" x="46"/></svg>
<div class="lb" style="right:635.5px;top:306px;">Desconto</div>
<div class="tf" style="left:668px;top:304px;width:81px;height:17px;text-align:left;line-height:15px;"></div>
<div class="lb" style="left:11.5px;top:329px;">Motivo Cancelamento</div>
<div class="dd dis" style="left:123px;top:324px;width:314px;height:20px;"><span class="ddt" style="line-height:18px"></span><span class="arr"></span></div>
<div class="dd" style="left:490px;top:324px;width:259px;height:20px;"><span class="ddt" style="line-height:18px">2 - Nf Saida / Nf Entrada (Digitacao Manual)</span><span class="arr"></span></div>
<div class="fr" style="left:9px;top:361px;width:716px;height:33px;"></div>
<div style="left:14px;top:358px;width:96px;height:6px;background:#c0c0c0"></div>
<div class="tt" style="left:24px;top:354px">Outros Dados</div>
<div class="bt" style="left:30px;top:370px;width:56px;height:20px;line-height:18px;">Produtos</div>
<div class="bt" style="left:99px;top:370px;width:50px;height:20px;line-height:18px;">Di.</div>
<div class="bt" style="left:156px;top:370px;width:74px;height:20px;line-height:18px;">Observacoes</div>
<div class="bt" style="left:242px;top:370px;width:60px;height:20px;line-height:18px;">Parcelas</div>
<div class="bt" style="left:314px;top:370px;width:47px;height:20px;line-height:18px;">Fretes</div>
<div class="bt" style="left:372px;top:370px;width:59px;height:20px;line-height:18px;">Pessoas</div>
<div class="bt" style="left:439px;top:370px;width:78px;height:20px;line-height:18px;">Reenviar Nfe</div>
<div class="bt" style="left:524px;top:370px;width:86px;height:20px;line-height:18px;">Espelho Nf</div>
<div class="fr" style="left:9px;top:401px;width:666px;height:130px;"></div>
<div style="left:17px;top:398px;width:33px;height:7px;background:#c0c0c0"></div>
<div style="left:227px;top:398px;width:75px;height:7px;background:#c0c0c0"></div>
<div style="left:414px;top:398px;width:61px;height:7px;background:#c0c0c0"></div>
<div class="tt" style="left:20px;top:397px">Icms</div>
<div class="tt" style="left:236px;top:397px">Despesas</div>
<div class="tt" style="left:432px;top:397px">Totais</div>
<div style="left:218px;top:402px;width:1px;height:212px;background:#7c7c7c"></div>
<div style="left:219px;top:402px;width:1px;height:212px;background:#f4f4f4"></div>
<div style="left:414px;top:402px;width:1px;height:68px;background:#7c7c7c"></div>
<div style="left:415px;top:402px;width:1px;height:68px;background:#f4f4f4"></div>
<div style="left:217px;top:470px;width:451px;height:1px;background:#7c7c7c"></div>
<div style="left:217px;top:471px;width:451px;height:1px;background:#f4f4f4"></div>
<div class="lb" style="right:1209.5px;top:416px;white-space:pre">Base</div>
<div class="tf" style="left:96px;top:414px;width:116px;height:16px;"></div>
<svg style="position:absolute;left:195px;top:420px;overflow:visible" width="12" height="5"><use href="#ast" x="0"/><use href="#ast" x="7"/></svg>
<div class="lb" style="right:1209.5px;top:435.5px;white-space:pre">Valor</div>
<div class="tf" style="left:96px;top:434px;width:116px;height:16px;text-align:right;line-height:14px;"></div>
<div class="lb" style="right:1209.5px;top:455px;white-space:pre">Base Subst.</div>
<div class="tf" style="left:96px;top:452px;width:116px;height:17px;text-align:right;line-height:15px;"></div>
<div class="lb" style="right:1209.5px;top:474px;white-space:pre">Valor Subst.</div>
<div class="tf" style="left:96px;top:471px;width:116px;height:17px;text-align:right;line-height:15px;"></div>
<div class="lb" style="right:1209.5px;top:491px;white-space:pre">Qtd. Especie</div>
<div class="tf" style="left:96px;top:491px;width:116px;height:17px;text-align:right;line-height:15px;"></div>
<div class="lb" style="right:1209.5px;top:512px;white-space:pre">Especie</div>
<div class="tf" style="left:96px;top:511px;width:116px;height:17px;text-align:right;line-height:15px;"></div>
<div class="lb" style="right:1209.5px;top:534px;white-space:pre">Base  Pis</div>
<div class="tf" style="left:96px;top:535px;width:116px;height:15px;text-align:right;line-height:13px;"></div>
<div class="lb" style="right:1209.5px;top:553px;white-space:pre">Vlr.Pis</div>
<div class="tf" style="left:96px;top:553px;width:116px;height:15px;text-align:right;line-height:13px;"></div>
<div class="lb" style="right:1209.5px;top:573px;white-space:pre">Base  Cofins</div>
<div class="tf" style="left:96px;top:572px;width:116px;height:16px;text-align:right;line-height:14px;"></div>
<div class="lb" style="right:1209.5px;top:592px;white-space:pre">Vlr.Cofins</div>
<div class="tf" style="left:96px;top:591px;width:116px;height:16px;text-align:right;line-height:14px;"></div>
<div class="lb" style="right:998.5px;top:415px;">Seguro</div>
<div class="tf" style="left:306px;top:414px;width:100px;height:16px;text-align:left;line-height:14px;"></div>
<div class="lb" style="right:998.5px;top:432px;">Acessorios</div>
<div class="tf" style="left:306px;top:434px;width:100px;height:16px;text-align:left;line-height:14px;"></div>
<div class="lb" style="right:998.5px;top:452px;">Frete Destacado</div>
<div class="tf" style="left:306px;top:452px;width:100px;height:17px;text-align:left;line-height:15px;"></div>
<div class="lb" style="right:998.5px;top:479px;">Vlr.Funrural</div>
<div class="tf" style="left:306px;top:478px;width:100px;height:16px;text-align:left;line-height:14px;"></div>
<div class="lb" style="right:787.5px;top:414px;">Ipi</div>
<div class="tf" style="left:524px;top:414px;width:134px;height:16px;"></div>
<svg style="position:absolute;left:635px;top:420px;overflow:visible" width="19" height="5"><use href="#ast" x="0"/><use href="#ast" x="7"/><use href="#ast" x="13"/></svg>
<div class="lb" style="right:787.5px;top:434px;">Produto</div>
<div class="tf" style="left:524px;top:434px;width:134px;height:16px;"></div>
<svg style="position:absolute;left:635px;top:442px;overflow:visible" width="19" height="5"><use href="#ast" x="0"/><use href="#ast" x="7"/><use href="#ast" x="13"/></svg>
<div class="lb" style="right:787.5px;top:454px;">Nota</div>
<div class="tf" style="left:524px;top:452px;width:134px;height:17px;"></div>
<svg style="position:absolute;left:628px;top:458px;overflow:visible" width="25" height="5"><use href="#ast" x="0"/><use href="#ast" x="7"/><use href="#ast" x="13"/><use href="#ast" x="20"/></svg>
<div class="lb" style="right:783.5px;top:476px;">Peso Liquido</div>
<div class="tf" style="left:524px;top:475px;width:134px;height:17px;"></div>
<svg style="position:absolute;left:641px;top:481px;overflow:visible" width="12" height="5"><use href="#ast" x="0"/><use href="#ast" x="7"/></svg>
<div class="lb" style="right:783.5px;top:495px;">Peso Bruto</div>
<div class="tf" style="left:524px;top:495px;width:134px;height:17px;"></div>
<svg style="position:absolute;left:641px;top:502px;overflow:visible" width="12" height="5"><use href="#ast" x="0"/><use href="#ast" x="7"/></svg>
<div class="bt" style="left:679px;top:481px;width:145px;height:20px;line-height:18px;">Motivo Nao Gerou Scm</div>
<div class="bt" style="left:679px;top:507px;width:67px;height:19px;line-height:17px;">Gerar Scm</div>
<div style="left:226px;top:559px;width:645px;height:20px;background:#e9e9e9"></div>
<svg style="position:absolute;left:349px;top:568px;overflow:visible" width="280" height="5"><use href="#ast" x="0"/><use href="#ast" x="7"/><use href="#ast" x="13"/><use href="#ast" x="20"/><use href="#ast" x="26"/><use href="#ast" x="33"/><use href="#ast" x="39"/><use href="#ast" x="46"/><use href="#ast" x="52"/><use href="#ast" x="59"/><use href="#ast" x="65"/><use href="#ast" x="72"/><use href="#ast" x="78"/><use href="#ast" x="85"/><use href="#ast" x="91"/><use href="#ast" x="98"/><use href="#ast" x="104"/><use href="#ast" x="111"/><use href="#ast" x="117"/><use href="#ast" x="124"/><use href="#ast" x="130"/><use href="#ast" x="137"/><use href="#ast" x="143"/><use href="#ast" x="150"/><use href="#ast" x="156"/><use href="#ast" x="163"/><use href="#ast" x="169"/><use href="#ast" x="176"/><use href="#ast" x="182"/><use href="#ast" x="189"/><use href="#ast" x="195"/><use href="#ast" x="202"/><use href="#ast" x="208"/><use href="#ast" x="215"/><use href="#ast" x="221"/><use href="#ast" x="228"/><use href="#ast" x="234"/><use href="#ast" x="241"/><use href="#ast" x="247"/><use href="#ast" x="254"/><use href="#ast" x="260"/><use href="#ast" x="267"/><use href="#ast" x="273"/></svg>
<div class="bt" style="left:878px;top:560px;width:91px;height:18px;line-height:16px;">Ocorrencia Nfe</div>
<div class="bt" style="left:228px;top:583px;width:273px;height:20px;line-height:18px;">Proximo Numero Nota</div>
<div style="left:36px;top:642px;width:116px;height:22px;background:#c9d9ed;border-radius:0 0 4px 4px;text-align:center;line-height:23px;color:#333;letter-spacing:-0.2px">Gerar NF. Importacao</div>
<div style="left:4px;top:640px;width:30px;height:26px;background:#94b8dc;border:3px solid #ff0000;border-radius:3px;text-align:center;line-height:21px;color:#111;letter-spacing:-0.2px">N.F</div>
</body></html>
